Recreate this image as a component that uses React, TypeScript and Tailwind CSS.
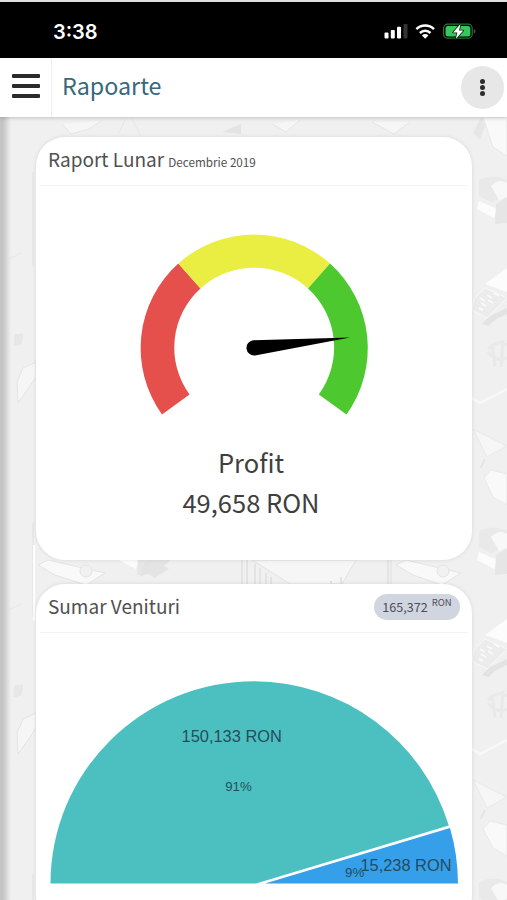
import type { ReactNode } from "react";

const SOURCE = "font-['Noto_Sans_CJK_SC',sans-serif]";

function StatusBar() {
  return (
    <div className="flex h-[58px] items-center justify-between border-t-2 border-[#dedede] bg-black pr-[31px] pl-[53px]">
      <span className="pt-[4px] font-['Inter',sans-serif] text-[20px] leading-none font-semibold text-white">3:38</span>
      <svg width="92" height="20" viewBox="384 21 92 20" className="mt-[1px]">
        <g fill="#fff">
          <rect x="384.500" y="32.500" width="4" height="6" rx="1" />
          <rect x="390.800" y="30" width="4" height="8.500" rx="1" />
          <rect x="397" y="26.800" width="4" height="11.700" rx="1" />
        </g>
        <rect x="403.500" y="24" width="4" height="14.500" rx="1" fill="#343434" />
        <g fill="none" stroke="#fff" strokeWidth="2.500">
          <path d="M416.400 29.200a12.600 12.600 0 0 1 17.600 0" />
          <path d="M419.900 33a7.600 7.600 0 0 1 10.600 0" />
        </g>
        <path d="M425.200 38.700l-3.200-3.300a4.600 4.600 0 0 1 6.400 0z" fill="#fff" />
        <rect x="443.600" y="24.200" width="28.600" height="14" rx="4" fill="none" stroke="#28713d" strokeWidth="1.200" />
        <rect x="445.500" y="26" width="24.800" height="10.400" rx="2.500" fill="#36c85b" />
        <path d="M473.800 29v4.500q1.500-.5 1.500-2.250t-1.500-2.250" fill="#4b5b4e" />
        <path d="M460.500 24l-7.500 8.500h4.300l-1.500 6.500 7.500-8.500h-4.300z" fill="#fff" stroke="#07200d" strokeWidth="1.600" paintOrder="stroke" strokeLinejoin="round" />
      </svg>
    </div>
  );
}

function Header() {
  return (
    <header className="relative flex h-[59px] items-center bg-white pr-[3px] shadow-[0_1px_4px_rgba(0,0,0,0.2)]">
      <button aria-label="Meniu" className="flex h-full w-[52px] flex-col justify-center gap-[5.500px] border-r border-[#eeeeee] pb-[3px] pl-[12px]">
        <i className="h-[4.500px] w-[28px] rounded-[1px] bg-[#2b2b2b]" />
        <i className="h-[4.500px] w-[28px] rounded-[1px] bg-[#2b2b2b]" />
        <i className="h-[4.500px] w-[28px] rounded-[1px] bg-[#2b2b2b]" />
      </button>
      <h1 className={`${SOURCE} ml-[10px] pb-[4px] text-[23.300px] leading-none text-[#38687b]`}>Rapoarte</h1>
      <button aria-label="Mai multe" className="ml-auto flex size-[43px] flex-col items-center justify-center gap-[1px] rounded-full bg-[#e7e7e7] pb-[1px]">
        <i className="size-[5px] rounded-full bg-[#2b2b2b]" />
        <i className="size-[5px] rounded-full bg-[#2b2b2b]" />
        <i className="size-[5px] rounded-full bg-[#2b2b2b]" />
      </button>
    </header>
  );
}

/* Faint office-desk illustration that repeats behind the cards. */
function Backdrop() {
  return (
    <svg className="absolute inset-0" width="507" height="783" viewBox="0 117 507 783">
      <defs>
        <filter id="soft" x="-5%" y="-5%" width="110%" height="110%"><feGaussianBlur stdDeviation="0.700" /></filter>
        <pattern id="office" x="150" y="117" width="358" height="351" patternUnits="userSpaceOnUse">
          <g transform="translate(-150 -117)" filter="url(#soft)">
            <path d="M479 180q14-7 28 0v16l-16 6-12-6z" fill="#e7e7e7" />
            <path d="M491 186q8-8 16-3v14l-8 3z" fill="#fafafa" />
            <path d="M479 201l18 8-3 9-17-9z" fill="#ffffff" />
            <path d="M496 204l11-7v26l-12 1z" fill="#e4e4e4" />
            <path d="M485 284l22-16v24z" fill="#ffffff" />
            <path d="M474 299l11-11 22 10-20 20-15-8z" fill="#ebebeb" stroke="#fafafa" />
            <path d="M480 298l5 3m2-6l5 3m2-5l5 3m-18 7l5 3m2-6l5 3m-14 5l4 2" stroke="#fcfcfc" strokeWidth="2" />
            <path d="M482 324l8-8 17-8v6q-13 5-18 12z" fill="#e0e0e0" />
            <path d="M488 349q10-10 19-4m-19 7q9 11 19 6m-15-14l3 22m8-26l-2 27" fill="none" stroke="#e7e7e7" strokeWidth="3" />
            <path d="M472 398l8 5 27-14" fill="none" stroke="#fafafa" strokeWidth="2.500" />
            <path d="M473 429l34 17-20 11z" fill="#f7f7f7" stroke="#e6e6e6" />
            <path d="M485 459l-11 22" stroke="#e2e2e2" strokeWidth="2" />
          </g>
          <g transform="translate(-150 -117)" filter="url(#soft)">
            <path d="M375 382l6-14 13-6v15l-8 12-10 14z" fill="#f8f8f8" stroke="#e0e0e0" />
            <path d="M367 259l12-6m-6 82l8-1-2 10-7 2z" fill="#e5e5e5" stroke="#e4e4e4" />
            <path d="M391 172v94" stroke="#dddddd" />
          </g>
        </pattern>
      </defs>
      <rect y="117" width="507" height="783" fill="#f0f0f0" />
      <g opacity="0.800"><rect y="117" width="507" height="783" fill="url(#office)" /></g>
      <g filter="url(#soft)" opacity="0.900">
        <path d="M483 117l10 30 14 9v-39zM484 478l7-8 16 4v31l-14-8z" fill="#fafafa" stroke="#e8e8e8" />
        <path d="M483 829l7-8 17 4v31l-14-8z" fill="#fafafa" stroke="#e8e8e8" />
        <path d="M461 120l12 13 8-16 4 8-5 15z" fill="#e6e6e6" />
        <path d="M62 124l9 10 18-5 12-8M118 134l8-15m6 0l8 16M272 124l14 8 14-12m72 2l22 12 16-12" fill="#f7f7f7" stroke="#e4e4e4" />
        <path d="M222 132l19-8v10z" fill="#e2e2e2" />
        <path d="M38 565l10-5 57 13-19 12-31-10z" fill="#fafafa" stroke="#e2e2e2" />
        <path d="M396 565l10-5 55 13-19 12-29-10z" fill="#fafafa" stroke="#e2e2e2" />
        <circle cx="86" cy="571" r="6" fill="#f2f2f2" stroke="#e2e2e2" />
        <circle cx="443" cy="571" r="6" fill="#f2f2f2" stroke="#e2e2e2" />
        <path d="M140 577l4-14q12-8 27-3l-7 6 5 3-15 9-6-5z" fill="#e3e3e3" />
        <path d="M252 560l38 24h52l14-24z" fill="#f7f7f7" stroke="#e0e0e0" />
        <path d="M242 560v25m5-25v25m8-21v21m5-17v17m6-12v12m5-8v8m60-4v4m10-8v8" stroke="#e2e2e2" strokeWidth="2" />
        <path d="M388 560v25" stroke="#d6d6d6" />
        <path d="M34 545v76" stroke="#fff" strokeWidth="2" />
      </g>
    </svg>
  );
}

function Card({ title, height, aside, children }: { title: ReactNode; height: string; aside?: ReactNode; children: ReactNode }) {
  return (
    <section className={`${height} w-[436px] shrink-0 rounded-[29px] bg-white shadow-[0_0_4px_rgba(0,0,0,0.1)]`}>
      <div className="mx-1 flex h-[49px] items-center justify-between border-b border-[#f3f3f3] pr-2 pb-[1px] pl-[8px]">
        <h2 className={`${SOURCE} pb-[4px] text-[19px] leading-none text-[#505050]`}>{title}</h2>
        {aside}
      </div>
      {children}
    </section>
  );
}

function Gauge() {
  return (
    <svg width="436" height="251" viewBox="36 186 436 251" className="block">
      <path d="M162 414.500A113.800 113.800 0 0 1 178.300 263.500L200.500 288.500A79.700 79.700 0 0 0 189.500 394.500z" fill="#e5504d" />
      <path d="M178.300 263.500A113.800 113.800 0 0 1 330 263.500L308 288.500A79.700 79.700 0 0 0 200.500 288.500z" fill="#eaee43" />
      <path d="M330 263.500A113.800 113.800 0 0 1 346.500 414.500L318.800 394.500A79.700 79.700 0 0 0 308 288.500z" fill="#4dc82e" />
      <path d="M253.200 340.200L350 337.500L255 355.400A7.600 7.600 0 1 1 253.200 340.200z" fill="#000" />
    </svg>
  );
}

function IncomeChart() {
  return (
    <svg width="436" height="267" viewBox="36 633 436 267" className="block">
      <path d="M50.500 883.500A204 202.300 0 0 1 254.500 681.200A204 204 0 0 1 448.800 825.500L256 883.500z" fill="#4cc0c0" />
      <path d="M265 883.500L450 828A204 202.500 0 0 1 458 883.500z" fill="#359fea" />
      <g fill="#244d5c" className="font-['Liberation_Sans',sans-serif]" textAnchor="middle">
        <text x="231.700" y="741.600" fontSize="16.400">150,133 RON</text>
        <text x="238.500" y="790.500" fontSize="13.300">91%</text>
        <text x="406" y="871.300" fontSize="16.400">15,238 RON</text>
        <text x="354.700" y="877" fontSize="13.300">9%</text>
      </g>
    </svg>
  );
}

export default function App() {
  return (
    <div className="h-[900px] w-[507px] overflow-hidden bg-[#f0f0f0]">
      <StatusBar />
      <div className="relative z-10"><Header /></div>
      <main className="relative h-[783px] overflow-hidden">
        <Backdrop />
        <div className="absolute inset-y-0 left-0 w-[11px] bg-linear-to-r from-[#c4c4c4] from-25% to-transparent" />
        <div className="relative flex flex-col gap-6 pt-[19.500px] pl-[36px]">
          <Card height="h-[423px]" title={<>Raport Lunar <small className="text-[11.700px]">Decembrie 2019</small></>}>
            <Gauge />
            <div className={`${SOURCE} flex flex-col items-center pt-[5px] pr-[6px] text-[25.500px] leading-[40px] text-[#3f3f3f]`}>
              <span>Profit</span>
              <span>49,658 RON</span>
            </div>
          </Card>
          <Card
            height="h-[340px]"
            title="Sumar Venituri"
            aside={
              <span className={`${SOURCE} flex h-[26px] w-[86px] items-center justify-center gap-[4px] rounded-full bg-[#d1d5e0] text-[12.600px] leading-none text-[#4b4f58]`}>
                165,372 <span className="pb-[8px] text-[9.500px]">RON</span>
              </span>
            }
          >
            <IncomeChart />
          </Card>
        </div>
      </main>
    </div>
  );
}
